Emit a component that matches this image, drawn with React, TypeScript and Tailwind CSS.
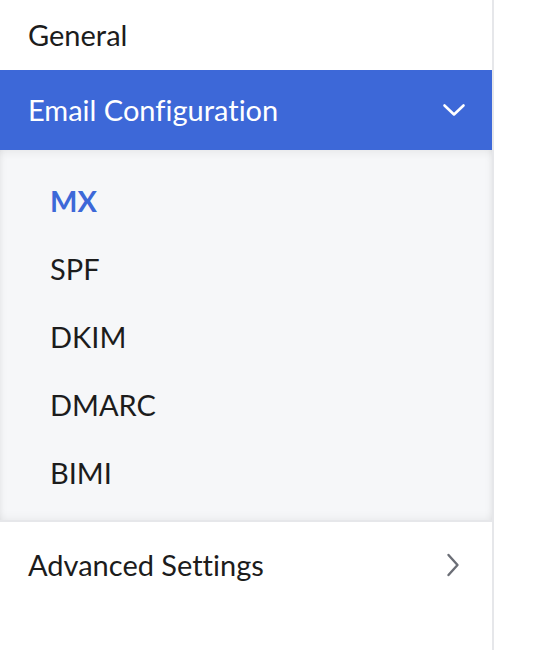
const subItems = ["MX", "SPF", "DKIM", "DMARC", "BIMI"];

function ChevronDownIcon() {
  return (
    <svg width="24" height="14" viewBox="0 0 24 14" fill="none" className="block">
      <path d="M2.5 2.5 L12 11.5 L21.5 2.5" stroke="white" strokeWidth="2.6" strokeLinecap="round" strokeLinejoin="round" />
    </svg>
  );
}

function ChevronRightIcon() {
  return (
    <svg width="14" height="24" viewBox="0 0 14 24" fill="none" className="block">
      <path d="M2.5 2 L11.5 12 L2.5 22" stroke="#6b6e76" strokeWidth="2.4" strokeLinecap="round" strokeLinejoin="round" />
    </svg>
  );
}

export default function App() {
  return (
    <div
      className="h-[650px] w-[542px] bg-white [font-variant-ligatures:none]"
      style={{ fontFamily: "Lato, 'Noto Sans', sans-serif" }}
    >
      <div className="h-full w-[494px] border-r-2 border-[#e6e7ea] bg-white">
        <div className="flex h-[70px] items-center px-[28px] text-[29px] text-[#1c1c1c]">General</div>

        <div className="flex h-[80px] items-center justify-between bg-[#3d68d8] pl-[28px] pr-[26px] text-[29px] text-white">
          <span>Email Configuration</span>
          <ChevronDownIcon />
        </div>

        <div className="flex h-[372px] flex-col border-b-2 border-[#e6e7ea] bg-[#f6f7f9] pt-[17px] shadow-[inset_0_6px_10px_-4px_rgba(0,0,0,0.07),inset_8px_0_10px_-8px_rgba(0,0,0,0.06),inset_-8px_0_10px_-8px_rgba(0,0,0,0.06),inset_0_-6px_10px_-4px_rgba(0,0,0,0.05)]">
          {subItems.map((item, i) => (
            <div
              key={item}
              className={`flex h-[68px] items-center px-[50px] text-[29px] ${i === 0 ? "font-bold text-[#3d68d8]" : "text-[#1c1c1c]"}`}
            >
              {item}
            </div>
          ))}
        </div>

        <div className="flex h-[86px] items-center justify-between pl-[28px] pr-[32px] text-[29px] text-[#1c1c1c]">
          <span>Advanced Settings</span>
          <ChevronRightIcon />
        </div>
      </div>
    </div>
  );
}
